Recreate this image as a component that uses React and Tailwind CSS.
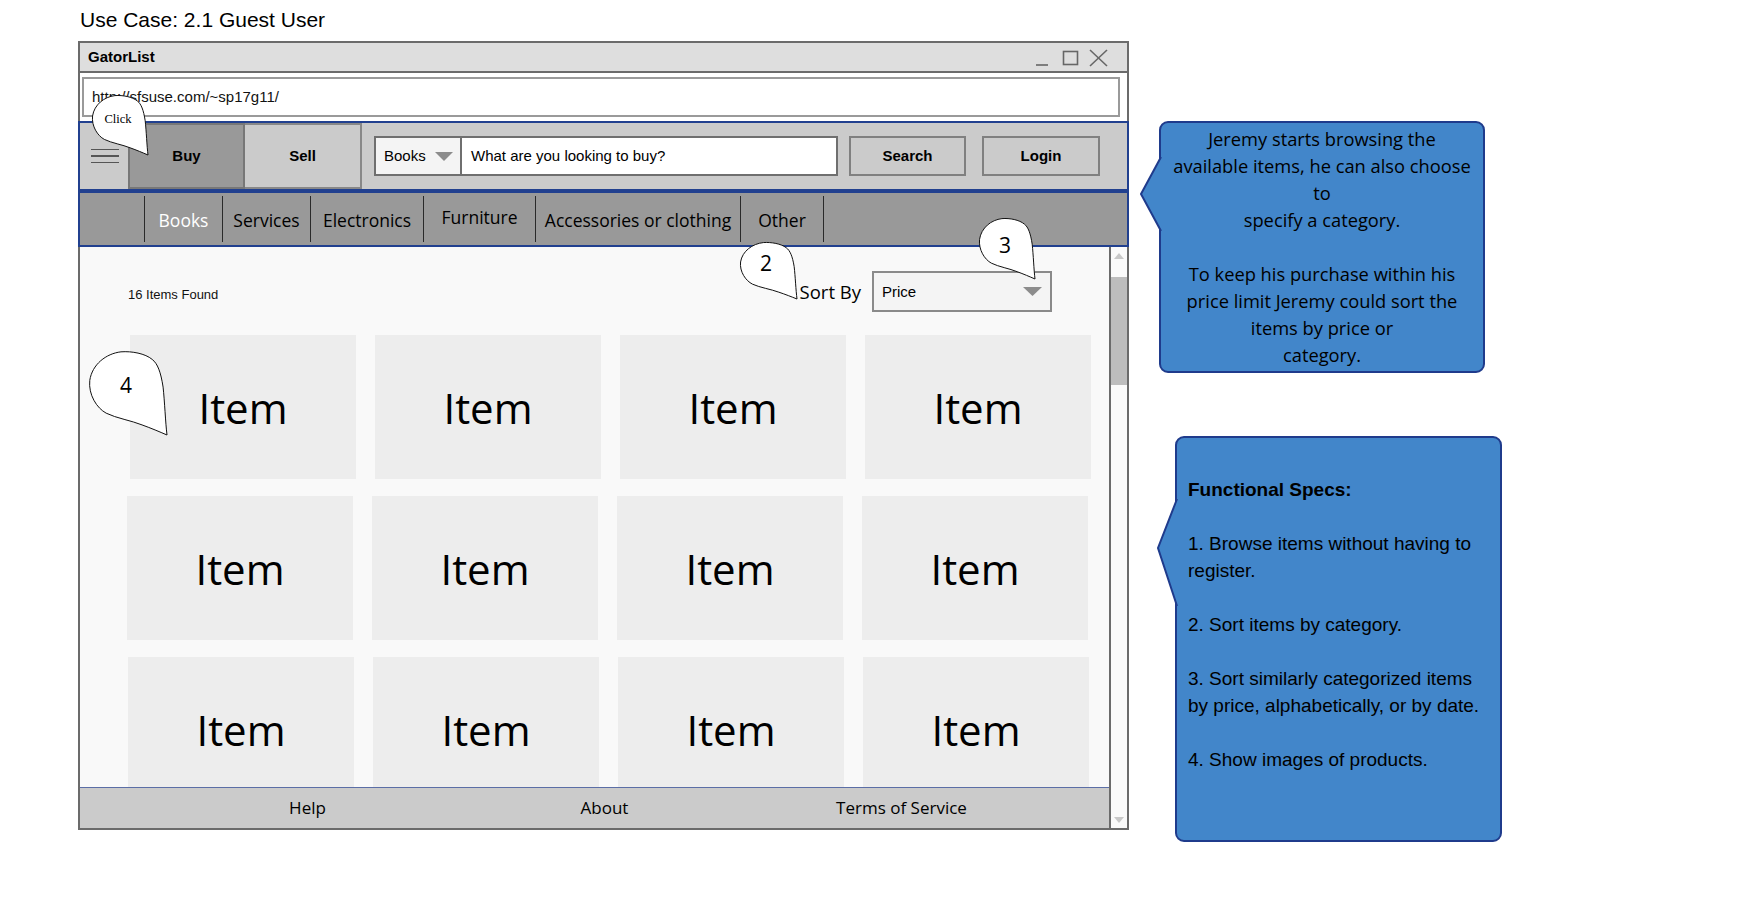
import React from "react";

const ROWS = [
  { shift: "ml-[50px]" },
  { shift: "ml-[47px]" },
  { shift: "ml-[48px]" },
];

const CATEGORIES = [
  { label: "Books", w: "w-[78px]", active: true },
  { label: "Services", w: "w-[88px]" },
  { label: "Electronics", w: "w-[113px]" },
  { label: "Furniture", w: "w-[112px]", raised: true },
  { label: "Accessories or clothing", w: "w-[205px]" },
  { label: "Other", w: "w-[84px]", last: true },
];

// teardrop note bubble, tail at bottom-right
function Bubble({ box, textPos, textClass, children }) {
  return (
    <div className={`absolute ${box}`}>
      <svg
        className="absolute inset-0 w-full h-full overflow-visible"
        viewBox="0 0 100 100"
        preserveAspectRatio="none"
      >
        <path
          d="M100 100 C98 85 97 60 95 43 C92 25 88 15 81 10 C72 3 55 0 41 1 C22 3 4 16 1 35 C-1 52 10 68 22 74 C35 80 55 83 68 88 C80 92 90 96 100 100 Z"
          fill="#fff"
          stroke="#111"
          strokeWidth="1"
          vectorEffect="non-scaling-stroke"
        />
      </svg>
      <span
        className={`absolute -translate-x-1/2 -translate-y-1/2 leading-none text-black ${textPos} ${textClass}`}
      >
        {children}
      </span>
    </div>
  );
}

function Callout({ className, tipSvg, children }) {
  return (
    <div
      className={`relative bg-[#4286ca] border-2 border-[#1f3b8c] rounded-[9px] ${className}`}
    >
      {tipSvg}
      {children}
    </div>
  );
}

export default function App() {
  return (
    <div className="relative w-[1747px] h-[899px] bg-white overflow-hidden font-['Liberation_Sans',Arial,sans-serif] text-black">
      {/* page heading */}
      <div className="h-[41px] pl-[80px] pt-[8px] text-[21px] leading-[24px]">
        Use Case: 2.1 Guest User
      </div>

      <div className="flex items-start">
        {/* browser window */}
        <div className="ml-[78px] w-[1051px] h-[789px] border-2 border-[#6b6b6b] flex flex-col bg-white">
          <div className="h-[30px] shrink-0 bg-[#dedede] border-b-2 border-[#6b6b6b] flex items-center justify-between pl-[8px] pr-[17px]">
            <span className="font-bold text-[15px] mt-[1px]">GatorList</span>
            <svg width="76" height="21" viewBox="0 0 76 21" fill="none" stroke="#666" strokeWidth="1.6">
              <line x1="2" y1="18" x2="14" y2="18" />
              <rect x="29.5" y="4.5" width="14" height="13" />
              <line x1="56" y1="3" x2="73" y2="19" />
              <line x1="73" y1="3" x2="56" y2="19" />
            </svg>
          </div>

          {/* address bar */}
          <div className="h-[48px] shrink-0 pl-[2px] pr-[7px] pt-[4px]">
            <div className="h-[40px] border-2 border-[#9a9a9a] bg-white flex items-center pl-[8px] text-[15px] text-[#111]">
              http://sfsuse.com/~sp17g11/
            </div>
          </div>

          {/* top nav */}
          <div className="-mx-[2px] h-[70px] shrink-0 border-2 border-[#21408f] bg-[#cbcbcb] flex items-stretch">
            <div className="w-[48px] flex flex-col items-center justify-center gap-[5px] pl-[2px]">
              <div className="w-[28px] h-[1.5px] bg-[#555]" />
              <div className="w-[28px] h-[1.5px] bg-[#555]" />
              <div className="w-[28px] h-[1.5px] bg-[#555]" />
            </div>
            <div className="w-[117px] bg-[#999] border-2 border-[#777] flex items-center justify-center font-bold text-[15px]">
              Buy
            </div>
            <div className="w-[117px] bg-[#cbcbcb] border-2 border-[#888] border-l-0 flex items-center justify-center font-bold text-[15px]">
              Sell
            </div>
            <div className="ml-[12px] self-center flex h-[40px]">
              <div className="w-[88px] bg-[#f4f4f4] border-2 border-[#6f6f6f] flex items-center justify-between pl-[8px] pr-[7px] text-[15px]">
                <span>Books</span>
                <svg width="18" height="9" viewBox="0 0 18 9">
                  <path d="M0 0 H18 L9 9 Z" fill="#8c8c8c" />
                </svg>
              </div>
              <div className="w-[376px] bg-white border-2 border-l-0 border-[#6f6f6f] flex items-center pl-[9px] text-[15px]">
                What are you looking to buy?
              </div>
            </div>
            <div className="ml-[11px] self-center w-[117px] h-[40px] bg-[#cbcbcb] border-2 border-[#808080] flex items-center justify-center font-bold text-[15px]">
              Search
            </div>
            <div className="ml-[16px] self-center w-[118px] h-[40px] bg-[#cbcbcb] border-2 border-[#808080] flex items-center justify-center font-bold text-[15px]">
              Login
            </div>
          </div>

          {/* category bar */}
          <div className="-mx-[2px] h-[56px] shrink-0 border-2 border-[#21408f] bg-[#999] flex items-stretch font-['Open_Sans',sans-serif] text-[17.5px]">
            <div className="w-[64px]" />
            {CATEGORIES.map((c) => (
              <div
                key={c.label}
                className={`${c.w} my-[3px] border-l border-[#2a2a2a] flex items-center justify-center ${
                  c.last ? "border-r" : ""
                } ${c.active ? "text-white" : "text-black"}`}
              >
                <span className={c.raised ? "mb-[4px]" : "mt-[2px]"}>{c.label}</span>
              </div>
            ))}
          </div>

          {/* body + scrollbar */}
          <div className="flex flex-1 min-h-0">
            <div className="w-[1029px] flex flex-col">
              <div className="h-[540px] bg-[#f9f9f9] overflow-hidden">
                <div className="mt-[24px] h-[41px] flex items-center pl-[48px] pr-[57px]">
                  <span className="mt-[7px] text-[13px] text-[#111]">16 Items Found</span>
                  <span className="ml-auto font-['Open_Sans',sans-serif] text-[18.5px]">Sort By</span>
                  <div className="ml-[11px] w-[180px] h-[41px] bg-[#f4f4f4] border-2 border-[#8a8a8a] flex items-center justify-between pl-[8px] pr-[8px] text-[15px]">
                    <span className="mt-[2px]">Price</span>
                    <svg width="19" height="9" viewBox="0 0 19 9">
                      <path d="M0 0 H19 L9.5 9 Z" fill="#8c8c8c" />
                    </svg>
                  </div>
                </div>
                <div className="mt-[23px] flex flex-col gap-[17px]">
                  {ROWS.map((r, i) => (
                    <div key={i} className={`flex gap-[19px] ${r.shift}`}>
                      {[0, 1, 2, 3].map((j) => (
                        <div
                          key={j}
                          className="w-[226px] h-[144px] bg-[#ededed] flex items-center justify-center font-['Open_Sans',sans-serif] text-[42px]"
                        >
                          Item
                        </div>
                      ))}
                    </div>
                  ))}
                </div>
              </div>
              <div className="h-[41px] bg-[#cbcbcb] border-t border-[#5b6ea6] grid grid-cols-[297px_297px_297px] pl-[79px] items-center text-center font-['Open_Sans',sans-serif] text-[17px]">
                <span>Help</span>
                <span>About</span>
                <span>Terms of Service</span>
              </div>
            </div>
            <div className="w-[18px] border-l-2 border-[#6b6b6b] bg-[#fafafa] flex flex-col items-center">
              <svg className="mt-[6px]" width="10" height="6" viewBox="0 0 10 6">
                <path d="M0 6 L5 0 L10 6 Z" fill="#c8c8c8" />
              </svg>
              <div className="mt-[18px] w-full h-[108px] bg-[#bdbdbd]" />
              <svg className="mt-auto mb-[5px]" width="10" height="6" viewBox="0 0 10 6">
                <path d="M0 0 L10 0 L5 6 Z" fill="#c8c8c8" />
              </svg>
            </div>
          </div>
        </div>

        {/* annotation boxes */}
        <div className="ml-[30px] flex flex-col">
          <Callout
            className="mt-[80px] w-[326px] h-[252px] pt-[2px] text-center font-['Open_Sans',sans-serif] text-[18.3px] leading-[27px]"
            tipSvg={
              <svg className="absolute -left-[22px] top-[33px]" width="26" height="76" viewBox="0 0 26 76">
                <polygon points="26,2 22,2 2,38 22,74 26,74" fill="#4286ca" />
                <polyline points="22,1 2,38 22,75" fill="none" stroke="#1f3b8c" strokeWidth="2" />
              </svg>
            }
          >
            <div>Jeremy starts browsing the</div>
            <div>available items, he can also choose</div>
            <div>to</div>
            <div>specify a category.</div>
            <div className="h-[27px]" />
            <div>To keep his purchase within his</div>
            <div>price limit Jeremy could sort the</div>
            <div>items by price or</div>
            <div>category.</div>
          </Callout>

          <Callout
            className="mt-[63px] ml-[16px] w-[327px] h-[406px] pt-[38px] pl-[11px] text-[19px] leading-[27px]"
            tipSvg={
              <svg className="absolute -left-[22px] top-[60px]" width="26" height="110" viewBox="0 0 26 110">
                <polygon points="26,2 22,2 3,50 22,107 26,107" fill="#4286ca" />
                <polyline points="22,1 3,50 22,108" fill="none" stroke="#1f3b8c" strokeWidth="2" />
              </svg>
            }
          >
            <div className="font-bold">Functional Specs:</div>
            <div className="h-[27px]" />
            <div>1. Browse items without having to</div>
            <div>register.</div>
            <div className="h-[27px]" />
            <div>2. Sort items by category.</div>
            <div className="h-[27px]" />
            <div>3. Sort similarly categorized items</div>
            <div>by price, alphabetically, or by date.</div>
            <div className="h-[27px]" />
            <div>4. Show images of products.</div>
          </Callout>
        </div>
      </div>

      {/* note markers */}
      <Bubble
        box="left-[92px] top-[95px] w-[56px] h-[60px]"
        textPos="left-[26px] top-[24px]"
        textClass="font-['Liberation_Serif',serif] text-[12.5px]"
      >
        Click
      </Bubble>
      <Bubble
        box="left-[740px] top-[242px] w-[57px] h-[57px]"
        textPos="left-[26px] top-[21px]"
        textClass="font-['Open_Sans',sans-serif] text-[21px]"
      >
        2
      </Bubble>
      <Bubble
        box="left-[979px] top-[218px] w-[56px] h-[61px]"
        textPos="left-[26px] top-[27px]"
        textClass="font-['Open_Sans',sans-serif] text-[21px]"
      >
        3
      </Bubble>
      <Bubble
        box="left-[89px] top-[351px] w-[78px] h-[84px]"
        textPos="left-[37px] top-[34px]"
        textClass="font-['Open_Sans',sans-serif] text-[21px]"
      >
        4
      </Bubble>
    </div>
  );
}
